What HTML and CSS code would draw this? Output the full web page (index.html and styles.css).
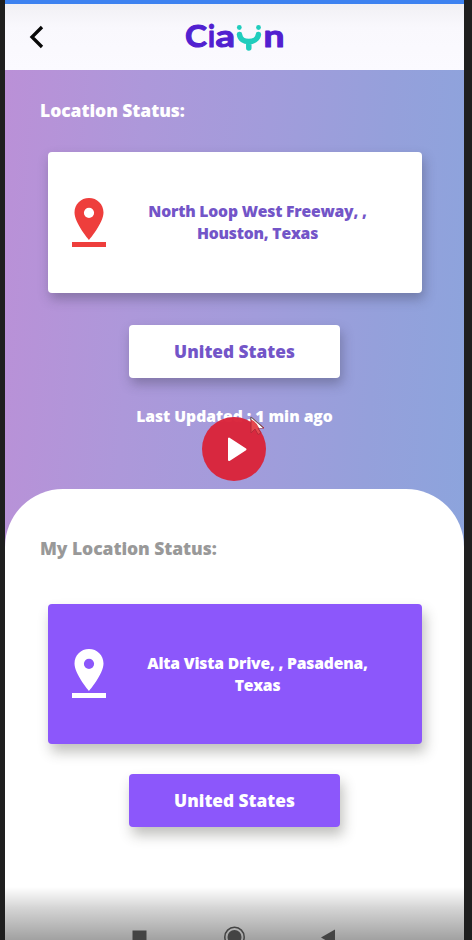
FILE: index.html
```html
<!DOCTYPE html>
<html lang="en">
<head>
<meta charset="utf-8">
<title>Ciayn</title>
<link rel="stylesheet" href="styles.css">
</head>
<body>
<div class="phone">
  <div class="statusbar"></div>
  <header class="header">
    <svg class="back" width="16" height="26" viewBox="0 0 16 26"><path d="M14 3 4 13l10 10" fill="none" stroke="#080808" stroke-width="3.300"/></svg>
    <svg class="logo" width="112" height="56" viewBox="-4 -10 112 56">
      <g class="logo-text">
        <text x="3" y="27.500" textLength="22" lengthAdjust="spacingAndGlyphs">C</text>
        <text x="26" y="27.500" textLength="7" lengthAdjust="spacingAndGlyphs">i</text>
        <text x="33.500" y="27.500" textLength="19.500" lengthAdjust="spacingAndGlyphs">a</text>
        <text x="81.500" y="27.500" textLength="21" lengthAdjust="spacingAndGlyphs">n</text>
      </g>
      <g class="logo-mark">
        <path d="M57.500 15.500c.5 4.500 4.500 7 9.200 7s9.200-2.500 9.700-7M66.800 22.500v6.500"/>
        <circle cx="57.300" cy="8.500" r="2.400"/><circle cx="76.500" cy="8.500" r="2.400"/>
      </g>
    </svg>
  </header>
  <section class="hero">
    <h2 class="title">Location Status:</h2>
    <div class="card">
      <svg class="pin" width="36" height="52" viewBox="0 0 36 52"><path fill-rule="evenodd" d="M18 1C9.800 1 3.500 7.300 3.500 15.500 3.500 26 18 43 18 43S32.500 26 32.500 15.500C32.500 7.300 26.200 1 18 1Zm0 9.700a5.100 5.100 0 1 1 0 10.200 5.100 5.100 0 0 1 0-10.200Z"/><path d="M1 45h34v5H1z"/></svg>
      <p class="address">North Loop West Freeway, ,<br>Houston, Texas</p>
    </div>
    <div class="country">United States</div>
    <p class="updated">Last Updated : 1 min ago</p>
  </section>
  <section class="sheet">
    <h2 class="title title-muted">My Location Status:</h2>
    <div class="card card-purple">
      <svg class="pin" width="36" height="52" viewBox="0 0 36 52"><path fill-rule="evenodd" d="M18 1C9.800 1 3.500 7.300 3.500 15.500 3.500 26 18 43 18 43S32.500 26 32.500 15.500C32.500 7.300 26.200 1 18 1Zm0 9.700a5.100 5.100 0 1 1 0 10.200 5.100 5.100 0 0 1 0-10.200Z"/><path d="M1 45h34v5H1z"/></svg>
      <p class="address">Alta Vista Drive, , Pasadena,<br>Texas</p>
    </div>
    <div class="country country-purple">United States</div>
  </section>
  <nav class="navbar">
    <svg width="459" height="53" viewBox="0 0 459 53"><path d="M127.500 43.500h14V53h-14zM330 42.500v16l-14-8z" fill="#444"/><circle cx="229.500" cy="50" r="9.700" fill="none" stroke="#444" stroke-width="1.500"/><circle cx="229.500" cy="50" r="7" fill="#444"/></svg>
  </nav>
</div>
<div class="play"><svg width="64" height="64" viewBox="0 0 64 64"><path d="M27 21.500v21.600L43.500 32.300z" fill="#fff" stroke="#fff" stroke-width="2" stroke-linejoin="round"/></svg></div>
<svg class="cursor" width="16" height="20" viewBox="0 0 16 20"><path d="M1 1v16l4-4 3 5.500 3-1.500-3-5h6z" fill="#e5484f" stroke="#b52a3a"/><path d="M1 1v2.500Q7 6 9 12h4z" fill="#fff"/><path d="M1 4V1l12 10.500" fill="none" stroke="#666"/></svg>
</body>
</html>
```
FILE: styles.css
```css
* { box-sizing: border-box; }
body {
  margin: 0;
  width: 472px;
  height: 940px;
  overflow: hidden;
  position: relative;
  background: #1f1f1f;
  font-family: "Open Sans", "Noto Sans", sans-serif;
  font-weight: 800;
}
h2, p { margin: 0; font-weight: 800; }
.phone {
  position: relative;
  width: 459px;
  height: 940px;
  margin-left: 5px;
  display: flex;
  flex-direction: column;
  background: linear-gradient(94deg, #bb90d7 0%, #ad98da 28%, #a29cdb 52%, #95a0db 75%, #8aa5dd 100%);
}
.statusbar { height: 4px; background: #3d82f0; }
.header {
  height: 66px;
  display: flex;
  align-items: flex-start;
  padding: 20px 0 0 23px;
  background: linear-gradient(#f1f0f4, #f9f8fd 35%, #fbfaff);
}
.logo { margin: -15px 0 0 134px; overflow: visible; }
.logo-text {
  font-family: Lato, sans-serif;
  font-size: 31px;
  font-weight: 700;
  fill: #5120d0;
  stroke: #5120d0;
  stroke-width: 1;
  stroke-linejoin: round;
}
.logo-mark path { fill: none; stroke: #20cdbd; stroke-width: 5.500; stroke-linecap: round; }
.logo-mark circle { fill: #20cdbd; }
.hero {
  height: 419px;
  display: flex;
  flex-direction: column;
  align-items: center;
}
.title {
  align-self: flex-start;
  margin: 28px 0 0 35px;
  height: 24px;
  line-height: 24px;
  font-size: 17.500px;
  letter-spacing: -.06px;
  color: #fff;
  white-space: nowrap;
}
.card {
  width: 374px;
  height: 141px;
  margin-top: 30px;
  padding-left: 23px;
  display: flex;
  align-items: center;
  background: #fff;
  border-radius: 4px;
  box-shadow: 2px 6px 12px rgba(50, 50, 70, .34);
  color: #7355c8;
}
.pin { fill: #ee3e3c; }
.address {
  width: 240px;
  margin: -2px 0 0 31px;
  text-align: center;
  font-size: 15.700px;
  letter-spacing: -.2px;
  line-height: 22px;
  white-space: nowrap;
}
.country {
  width: 211px;
  height: 53px;
  margin-top: 32px;
  display: flex;
  align-items: center;
  justify-content: center;
  background: #fff;
  border-radius: 4px;
  box-shadow: 2px 6px 12px rgba(50, 50, 70, .34);
  color: #7355c8;
  font-size: 17.300px;
}
.updated {
  margin-top: 27px;
  line-height: 22px;
  font-size: 15.700px;
  letter-spacing: -.05px;
  color: #fff;
  white-space: nowrap;
}
.sheet {
  flex: 1;
  display: flex;
  flex-direction: column;
  align-items: center;
  padding-top: 19px;
  background: #fff;
  border-radius: 58px 58px 0 0;
}
.title-muted { color: #999; }
.sheet .card { margin-top: 44px; }
.card-purple, .country-purple {
  background: #8c57fb;
  color: #fff;
  box-shadow: 3px 8px 13px rgba(60, 60, 50, .32);
}
.card-purple { height: 140px; }
.card-purple .pin { fill: #fff; }
.card-purple .address { margin-top: 0; }
.sheet .country { margin-top: 30px; }
.navbar {
  position: absolute;
  left: 0;
  bottom: 0;
  height: 53px;
  background: linear-gradient(transparent, rgba(0, 0, 0, .17) 40%, rgba(0, 0, 0, .37));
}
.cursor { position: absolute; left: 250px; top: 416px; }
.play {
  position: absolute;
  left: 202px;
  top: 417px;
  width: 64px;
  height: 64px;
  border-radius: 50%;
  background: rgba(218, 36, 58, .97);
}
.play svg { display: block; }
```
